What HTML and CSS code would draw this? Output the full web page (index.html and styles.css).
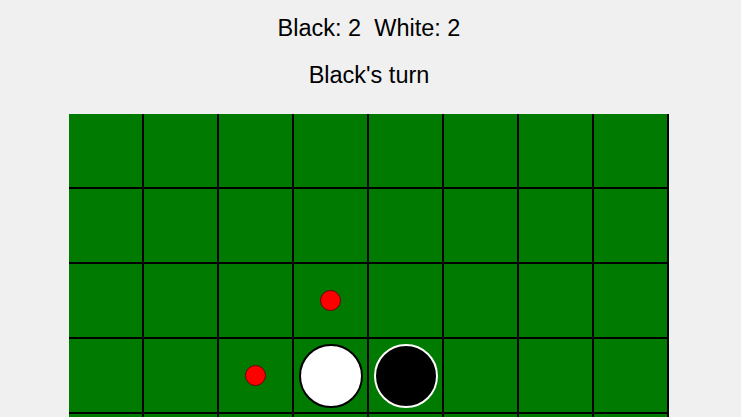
FILE: index.html
```html
<!DOCTYPE html>
<html>
<head>
<meta charset="utf-8">
<link rel="stylesheet" href="styles.css">
</head>
<body>
<main class="game">
  <div class="score">Black: 2&nbsp; White: 2</div>
  <div class="turn">Black's turn</div>
  <div class="board">
    <div class="cell"></div><div class="cell"></div><div class="cell"></div><div class="cell"></div><div class="cell"></div><div class="cell"></div><div class="cell"></div><div class="cell"></div>
    <div class="cell"></div><div class="cell"></div><div class="cell"></div><div class="cell"></div><div class="cell"></div><div class="cell"></div><div class="cell"></div><div class="cell"></div>
    <div class="cell"></div><div class="cell"></div><div class="cell"></div><div class="cell"><span class="hint"></span></div><div class="cell"></div><div class="cell"></div><div class="cell"></div><div class="cell"></div>
    <div class="cell"></div><div class="cell"></div><div class="cell"><span class="hint"></span></div><div class="cell"><span class="piece white"></span></div><div class="cell"><span class="piece black"></span></div><div class="cell"></div><div class="cell"></div><div class="cell"></div>
    <div class="cell"></div><div class="cell"></div><div class="cell"></div><div class="cell"><span class="piece black"></span></div><div class="cell"><span class="piece white"></span></div><div class="cell"><span class="hint"></span></div><div class="cell"></div><div class="cell"></div>
    <div class="cell"></div><div class="cell"></div><div class="cell"></div><div class="cell"></div><div class="cell"><span class="hint"></span></div><div class="cell"></div><div class="cell"></div><div class="cell"></div>
    <div class="cell"></div><div class="cell"></div><div class="cell"></div><div class="cell"></div><div class="cell"></div><div class="cell"></div><div class="cell"></div><div class="cell"></div>
    <div class="cell"></div><div class="cell"></div><div class="cell"></div><div class="cell"></div><div class="cell"></div><div class="cell"></div><div class="cell"></div><div class="cell"></div>
  </div>
</main>
</body>
</html>
```
FILE: styles.css
```css
html, body {
  margin: 0;
  padding: 0;
  background: #f0f0f0;
}
.game {
  width: 738px;
  display: flex;
  flex-direction: column;
  align-items: center;
  font-family: "Liberation Sans", Arial, sans-serif;
  color: #000;
}
.score {
  margin-top: 15px;
  font-size: 23.5px;
  line-height: 26px;
}
.turn {
  margin-top: 21px;
  font-size: 23.5px;
  line-height: 26px;
}
.board {
  margin-top: 26px;
  display: grid;
  grid-template-columns: repeat(8, 75px);
  grid-template-rows: repeat(8, 75px);
  background: #007a00;
}
.cell {
  box-sizing: border-box;
  border-right: 2px solid #000;
  border-bottom: 2px solid #000;
  display: flex;
  align-items: center;
  justify-content: center;
}
.piece {
  box-sizing: border-box;
  width: 64px;
  height: 64px;
  border-radius: 50%;
}
.piece.white {
  background: #fff;
  border: 2px solid #000;
}
.piece.black {
  background: #000;
  border: 2px solid #fff;
}
.hint {
  box-sizing: border-box;
  width: 21px;
  height: 21px;
  border-radius: 50%;
  background: #ff0000;
  border: 1px solid #6a0000;
}
```
